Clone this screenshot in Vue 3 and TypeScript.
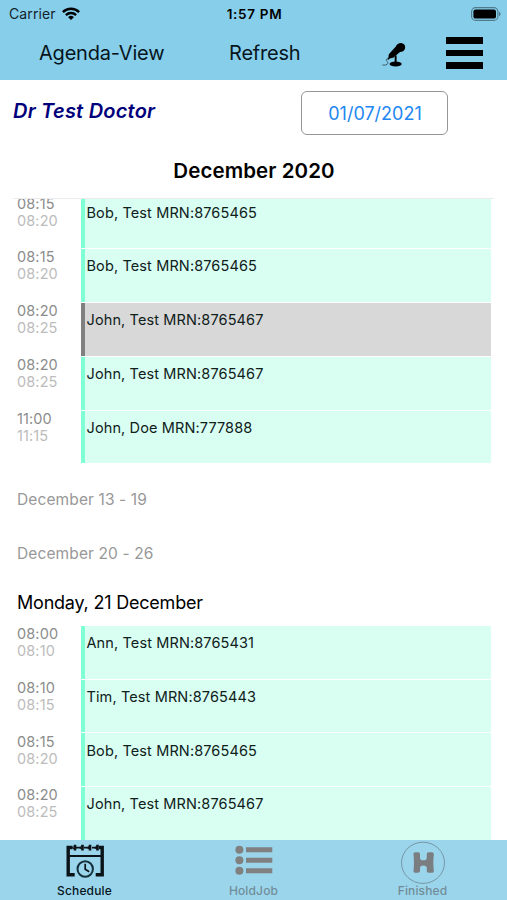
<script setup lang="ts">
interface Appointment {
  start: string
  end: string
  label: string
  held?: boolean
}

const earlier: Appointment[] = [
  { start: '08:15', end: '08:20', label: 'Bob, Test MRN:8765465' },
  { start: '08:15', end: '08:20', label: 'Bob, Test MRN:8765465' },
  { start: '08:20', end: '08:25', label: 'John, Test MRN:8765467', held: true },
  { start: '08:20', end: '08:25', label: 'John, Test MRN:8765467' },
  { start: '11:00', end: '11:15', label: 'John, Doe MRN:777888' },
]

const monday: Appointment[] = [
  { start: '08:00', end: '08:10', label: 'Ann, Test MRN:8765431' },
  { start: '08:10', end: '08:15', label: 'Tim, Test MRN:8765443' },
  { start: '08:15', end: '08:20', label: 'Bob, Test MRN:8765465' },
  { start: '08:20', end: '08:25', label: 'John, Test MRN:8765467' },
]

const emptyWeeks: string[] = ['December 13 - 19', 'December 20 - 26']
</script>

<template>
  <div class="screen">
    <header class="top">
      <div class="status">
        <div class="carrier">
          <span>Carrier</span>
          <svg class="wifi" viewBox="0 0 18 13" aria-hidden="true">
            <g fill="none" stroke="#000" stroke-width="2.4">
              <path d="M0.9 5.1a11.5 11.5 0 0 1 16.2 0" />
              <path d="M3.9 8.1a7.2 7.2 0 0 1 10.2 0" />
            </g>
            <path d="M9 13 6.1 10.2a4.1 4.1 0 0 1 5.8 0z" />
          </svg>
        </div>
        <span class="clock">1:57 PM</span>
        <svg class="battery" viewBox="0 0 30 14" aria-hidden="true">
          <rect x="0.6" y="0.6" width="26.3" height="12.8" rx="4" fill="none" stroke="#4f7b8d" stroke-width="1.1" />
          <rect x="2.4" y="2.4" width="22.6" height="9.2" rx="2.2" />
          <path d="M28 4.8c2.1.7 2.1 3.7 0 4.4z" fill="#4f7b8d" />
        </svg>
      </div>
      <nav class="toolbar">
        <button class="agenda">Agenda-View</button>
        <button class="refresh">Refresh</button>
        <button class="mic" aria-label="Dictate">
          <svg viewBox="0 0 25 26" aria-hidden="true">
            <path d="M14.200 4.800C15.600 2 18 .8 20.600 1.200c2.900.5 4.300 3.400 3.200 6-.8 1.900-2.400 3-5 3.300l-7.200 6-3.600.7-1.600 1.500-.9-1 1.200-1.400.4-3.600z" />
            <path d="M13.200 14h2v7.500h-2z" />
            <ellipse cx="14.200" cy="22.900" rx="6.300" ry="2.700" />
            <path d="M6 16.700c-3.800 2.800.9 3.400 0 5.700-.7 1.700-2.700 1.700-5.500 1.600" fill="none" stroke="#2b4855" stroke-width=".9" />
          </svg>
        </button>
        <button class="menu" aria-label="Menu"><i></i><i></i><i></i></button>
      </nav>
    </header>

    <section class="doctor">
      <h1>Dr Test Doctor</h1>
      <button class="date">01/07/2021</button>
    </section>

    <h2 class="month">December 2020</h2>

    <main class="agenda-list">
      <div class="events clipped">
        <div v-for="(a, i) in earlier" :key="i" class="row">
          <div class="times"><span>{{ a.start }}</span><span class="end">{{ a.end }}</span></div>
          <div class="event" :class="{ held: a.held }">{{ a.label }}</div>
        </div>
      </div>
      <p v-for="w in emptyWeeks" :key="w" class="week">{{ w }}</p>
      <h3 class="day">Monday, 21 December</h3>
      <div class="events">
        <div v-for="(a, i) in monday" :key="i" class="row">
          <div class="times"><span>{{ a.start }}</span><span class="end">{{ a.end }}</span></div>
          <div class="event" :class="{ held: a.held }">{{ a.label }}</div>
        </div>
      </div>
    </main>

    <footer class="tabs">
      <button class="tab active">
        <svg class="icon" viewBox="0 0 44 44" aria-hidden="true">
          <g fill="none" stroke="#0a1317">
            <path d="M9.5 7.5H5.2v27.2h6.5M36 7.5h3.2v27.2h-6.5" stroke-width="3.4" />
            <path d="M5 16h34" stroke-width="2" />
            <path d="M13 7.6h5M21 7.6h5M29 7.6h5" stroke-width="1.8" />
            <path d="M12 4.8v5.8M19.5 4.8v5.8M27 4.8v5.8M34.5 4.8v5.8" stroke-width="2.6" />
            <path d="m9 7.7 3-1.5v3zM16.3 7.7l3-1.5v3zM24 7.7l3-1.5v3zM31.3 7.7l3-1.5v3z" stroke-width="1" />
            <circle cx="22.2" cy="29" r="7.7" stroke="#14303d" stroke-width="2" />
            <path d="M22.2 23.8v5.4l4 2.5" stroke-width="1.7" />
          </g>
        </svg>
        <span>Schedule</span>
      </button>
      <button class="tab">
        <svg class="icon" viewBox="0 0 44 44" fill="#808080" aria-hidden="true">
          <circle cx="7.4" cy="9.700" r="4" /><circle cx="7.4" cy="20.200" r="4" /><circle cx="7.4" cy="30.700" r="4" />
          <path d="M14 7.200h26.300v5H14zM14 17.700h26.300v5H14zM14 28.200h26.300v5H14z" />
        </svg>
        <span>HoldJob</span>
      </button>
      <button class="tab">
        <svg class="icon finished" viewBox="0 0 44 44" aria-hidden="true">
          <ellipse cx="22" cy="22.800" rx="21.500" ry="20.600" fill="none" stroke="#7597a5" />
          <path d="M14.500 12.200h2.500c1.500 0 2 .7 2 2v3.500c0 1.700 1 2.600 3.300 2.600s3.500-.9 3.500-2.600v-3.500c0-1.300.6-2 2-2h3c1.500 0 2.100.9 2 2.300-.6 5.400-.6 10.800 0 16 .2 1.500-.5 2.300-2 2.300h-3c-1.500 0-2-.7-2-2v-2.500c0-2-1.200-2.800-3.500-2.800S19 26.300 19 28.300v2.500c0 1.300-.7 2-2 2h-2.500c-1.500 0-2.100-.8-2-2.300.6-5.200.6-10.600 0-16-.1-1.400.5-2.300 2-2.300z" fill="#7b7e80" />
        </svg>
        <span>Finished</span>
      </button>
    </footer>
  </div>
</template>

<style>
body {
  margin: 0;
  background: #fff;
}
</style>

<style scoped>
.screen {
  display: flex;
  flex-direction: column;
  height: 900px;
  overflow: hidden;
  background: #fff;
  color: #000;
  font-family: Inter, 'Liberation Sans', sans-serif;
  white-space: nowrap;
}
button {
  padding: 0;
  border: 0;
  background: none;
  color: inherit;
  font: inherit;
}
h1, h2, h3, p {
  margin: 0;
}
.top {
  flex: none;
  height: 79.5px;
  background: #87ceeb;
}
.status {
  display: grid;
  grid-template-columns: 1fr auto 1fr;
  align-items: center;
  height: 27px;
  padding: 0 6px 0 9px;
  font-size: 14px;
}
.carrier {
  display: flex;
  align-items: center;
  gap: 6px;
  color: #12242c;
  letter-spacing: 0.1px;
}
.wifi {
  width: 18px;
  height: 13px;
}
.clock {
  padding-right: 1px;
  font-size: 13.5px;
  font-weight: 600;
  letter-spacing: 0.7px;
}
.battery {
  justify-self: end;
  width: 30px;
  height: 14px;
}
.toolbar {
  display: flex;
  align-items: center;
  height: 52px;
  padding-left: 39px;
  color: #06151c;
  font-size: 20px;
}
.agenda,
.refresh {
  letter-spacing: -0.200px;
  text-align: left;
}
.agenda {
  width: 190px;
}
.refresh {
  width: 153px;
}
.mic,
.mic svg {
  display: block;
  width: 24px;
  height: 25px;
}
.mic {
  padding-top: 1px;
}
.menu {
  display: flex;
  flex-direction: column;
  gap: 6px;
  margin-left: 40px;
}
.menu i {
  width: 37px;
  height: 6.500px;
  background: #000;
}
.doctor {
  display: flex;
  flex: none;
  justify-content: space-between;
  height: 68px;
  padding: 11.5px 59px 0 13px;
  box-sizing: border-box;
}
.doctor h1 {
  padding-top: 7.500px;
  color: #00007b;
  font-size: 20px;
  font-style: italic;
  font-weight: 600;
  letter-spacing: 0.220px;
  line-height: 24px;
}
.date {
  box-sizing: border-box;
  width: 147px;
  height: 43.5px;
  padding: 1px 0 0 1px;
  border: 1.5px solid #969696;
  border-radius: 6px;
  color: #2287f0;
  font-size: 18px;
}
.month {
  flex: none;
  height: 50px;
  padding-left: 1px;
  font-size: 20.500px;
  font-weight: 600;
  letter-spacing: 0.080px;
  line-height: 45px;
  text-align: center;
}
.agenda-list {
  flex: 1;
  min-height: 0;
  overflow: hidden;
  margin: 0 13px;
  border-top: 1px solid #ececec;
}
.events {
  padding: 0 3px 0 4px;
}
.clipped {
  margin-top: -3px;
}
.row {
  display: flex;
  height: 53.75px;
}
.times {
  display: flex;
  flex-direction: column;
  width: 63.500px;
  margin-top: -0.800px;
  color: #8c8c8c;
  font-size: 14.5px;
  letter-spacing: 0.120px;
  line-height: 17px;
}
.times .end {
  color: #bcbcbc;
}
.event {
  flex: 1;
  box-sizing: border-box;
  height: 52.75px;
  padding: 8.200px 0 0 2px;
  border-left: 4px solid #7fffd4;
  background: #d8fff2;
  color: #10201b;
  font-size: 14.5px;
  letter-spacing: 0.120px;
  line-height: 18px;
}
.event.held {
  border-left-color: #808080;
  background: #d8d8d8;
}
.week {
  height: 53.75px;
  padding-left: 4px;
  color: #989898;
  font-size: 15.5px;
  letter-spacing: 0.120px;
  line-height: 72px;
}
.day {
  height: 54.100px;
  padding-left: 4px;
  font-size: 18px;
  font-weight: 400;
  letter-spacing: -0.210px;
  line-height: 61px;
}
.tabs {
  display: grid;
  flex: none;
  grid-template-columns: repeat(3, 1fr);
  height: 60px;
  background: #9bd5ec;
}
.tab {
  display: flex;
  flex-direction: column;
  align-items: center;
  color: #718d98;
  font-size: 12px;
  font-weight: 500;
  letter-spacing: 0.150px;
  line-height: 14px;
}
.tab.active {
  color: #07151c;
}
.icon {
  display: block;
  width: 44px;
  height: 44px;
}
</style>
